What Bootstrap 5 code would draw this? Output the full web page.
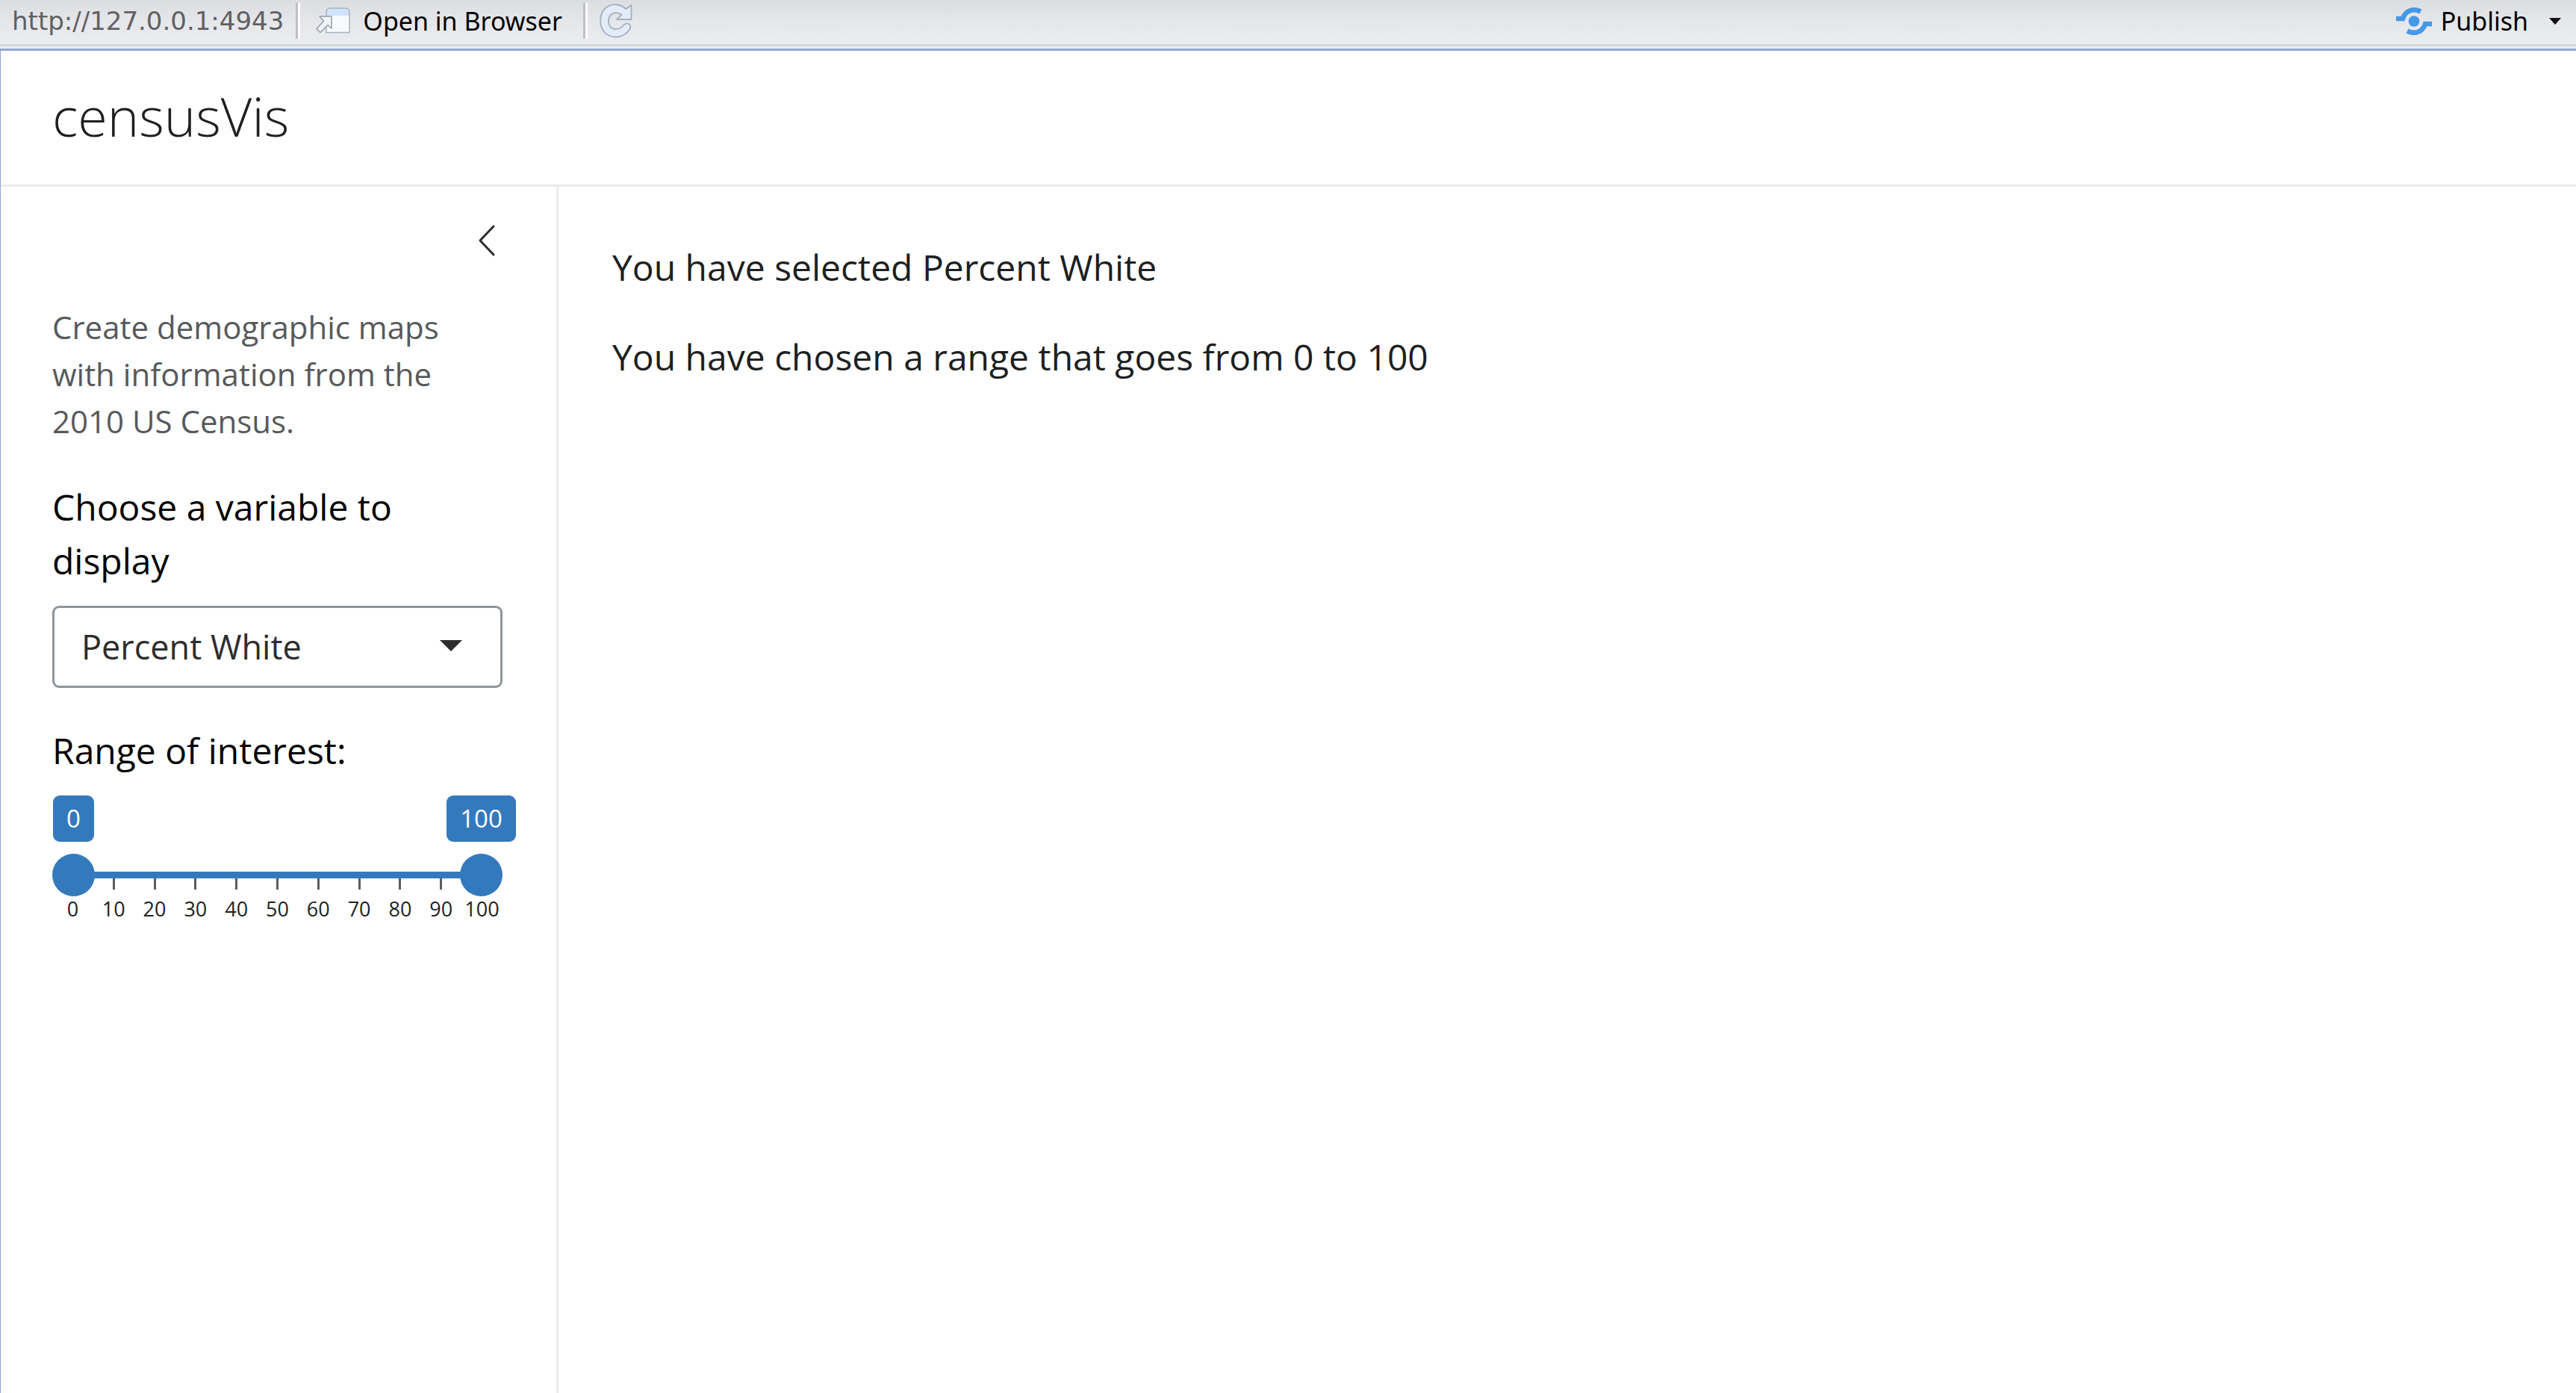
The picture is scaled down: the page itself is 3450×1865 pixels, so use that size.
<!DOCTYPE html>
<html lang="en">
<head>
<meta charset="utf-8">
<meta name="viewport" content="width=device-width, initial-scale=1">
<title>censusVis</title>
<link href="https://cdn.jsdelivr.net/npm/bootstrap@5.3.0/dist/css/bootstrap.min.css" rel="stylesheet">
<script src="https://cdn.jsdelivr.net/npm/bootstrap@5.3.0/dist/js/bootstrap.bundle.min.js"></script>
<style>
  :root { --accent: #3579bd; --rule: #ebebeb; --frame: #92a7d6; }
  body { font-family: "Open Sans", sans-serif; font-size: 48px; line-height: 72px; color: #1d1f21; background: #fff; }

  .viewer-bar { height: 59px; padding: 0 20px 3px 16px; background: linear-gradient(#dcdde1, #e6e7eb 50%, #ebecf0); font-family: "Noto Sans", sans-serif; font-size: 34px; line-height: 48px; }
  .viewer-edge { height: 9px; border-top: 3px solid #d5d6da; border-bottom: 3px solid var(--frame); background: #e9eaee; }
  .viewer-url { font-family: "DejaVu Sans", sans-serif; color: #616161; }
  .viewer-split { width: 6px; height: 48px; background: linear-gradient(90deg, #bfc0c4 0 3px, #fff 3px); }
  .viewer-bar button { padding: 0; border: 0; background: none; color: #000; display: flex; align-items: center; }
  .viewer-bar svg { display: block; }
  .viewer-bar .viewer-open { margin: 0 28px 0 20px; }
  .viewer-bar .publish { margin-right: 28px; gap: 12px; }

  .app { border-left: 1px solid var(--frame); }
  .app-head { padding: 46px 69px 50px; border-bottom: 3px solid var(--rule); }
  .app-head h1 { font-size: 72px; font-weight: 300; line-height: 83px; }
  .side { width: 747px; padding: 48px 72px 72px 69px; border-right: 3px solid var(--rule); }
  .side-toggle { padding: 0; border: 0; background: none; margin-bottom: 60px; }
  .side-toggle svg { display: block; }
  .side-help { font-size: 42px; line-height: 63px; color: #58595b; margin-bottom: 48px; }
  .side label, .side legend { font-size: 48px; line-height: 72px; color: #000; margin-bottom: 24px; float: none; }
  .side .form-select { height: 110px; border: 3px solid #8d959e; border-radius: 9px; padding: 0 100px 0 36px; font-size: 45px; line-height: 68px; color: #2d2d2d; margin-bottom: 48px; background-image: url("data:image/svg+xml,%3csvg xmlns='http://www.w3.org/2000/svg' viewBox='0 0 30 15'%3e%3cpath fill='%232d2d2d' d='M0 0h30L15 15z'/%3e%3c/svg%3e"); background-size: 30px 15px; background-position: right 51px top 43px; }

  .range-ends { margin-bottom: 16px; }
  .range-ends > div { width: 57px; }
  .range-ends output { flex: none; height: 62px; padding: 0 18px; border-radius: 9px; background: var(--accent); color: #fff; font-size: 33px; line-height: 62px; }
  .range-pair { display: grid; height: 57px; position: relative; z-index: 1; background: linear-gradient(var(--accent), var(--accent)) center / calc(100% - 57px) 9px no-repeat; }
  .range-pair input { grid-area: 1 / 1; width: 100%; height: 57px; margin: 0; background: none; appearance: none; pointer-events: none; }
  .range-pair input::-webkit-slider-runnable-track { height: 57px; background: none; }
  .range-pair input::-webkit-slider-thumb { appearance: none; width: 57px; height: 57px; border: 0; border-radius: 50%; background: var(--accent); pointer-events: auto; }
  .range-scale { margin-top: -24px; font-size: 27px; line-height: 36px; color: #222; }
  .range-scale span { flex: 1 1 0; text-align: center; }
  .range-scale span::before { content: ""; display: block; width: 3px; height: 15px; margin: 0 auto 8px; background: #5c5c5c; }
  .results { padding: 72px; }
  .results p { margin-bottom: 48px; }
</style>
</head>
<body class="min-vh-100 d-flex flex-column">
  <nav class="viewer-bar d-flex align-items-center" aria-label="Viewer">
    <span class="viewer-url">http://127.0.0.1:4943</span>
    <span class="viewer-split ms-3"></span>
    <button type="button" class="viewer-open gap-3">
      <svg width="48" height="36" viewBox="0 0 48 36" aria-hidden="true">
        <path d="M15 33.500V7q0-6 6-6h19q6 0 6 6v26.500z" fill="#f8fbfd"/>
        <path d="M15 11V7q0-6 6-6h19q6 0 6 6v4z" fill="#cfe3fb"/>
        <path d="M15 33.500V7q0-6 6-6h19q6 0 6 6v26.500z" fill="none" stroke="#a9b4bf" stroke-width="1.500"/>
        <path d="M6 12h16v16l-5-4.500L7 33.500 2 28.500 11.500 18z" fill="#f1f4f8" stroke="#91a0ad" stroke-width="1.500" stroke-linejoin="round"/>
      </svg>
      <span>Open in Browser</span>
    </button>
    <span class="viewer-split"></span>
    <button type="button" class="ms-3" aria-label="Refresh">
      <svg width="44" height="46" viewBox="0 0 44 46" aria-hidden="true">
        <path d="M42.500 2v19H23l6.500-6.500C20 9 12 14 12 23.500c0 11 12 14 19.500 6 2-3 5.500-4 8-2s2.500 4.500 0 8C28 51 1.500 46 1.200 23.500 1 2 22-5 35.500 7z" fill="#e3ecfb" stroke="#a6afbb" stroke-width="1.800" stroke-linejoin="round"/>
      </svg>
    </button>
    <div class="d-flex align-items-center ms-auto">
      <button type="button" class="publish">
        <svg width="48" height="37" viewBox="0 0 48 37" aria-hidden="true">
          <circle cx="24" cy="18.500" r="7.300" fill="#4599e5"/>
          <path d="M0 15h9C12 5 22 0 33 5.500M48 22h-9C36 32 26 37 15 31.500" fill="none" stroke="#4599e5" stroke-width="6.500"/>
        </svg>
        <span>Publish</span>
      </button>
      <button type="button" class="publish-more" aria-label="Publish options">
        <svg width="16" height="9" viewBox="0 0 16 9" aria-hidden="true"><path d="M0 0h16L8 9z" fill="#111"/></svg>
      </button>
    </div>
  </nav>
  <div class="viewer-edge"></div>

  <div class="app flex-grow-1 d-flex flex-column">
    <header class="app-head"><h1 class="m-0">censusVis</h1></header>
    <div class="d-flex flex-grow-1">
      <aside class="side flex-shrink-0">
        <div class="d-flex justify-content-end">
          <button type="button" class="side-toggle" aria-label="Toggle sidebar">
            <svg width="40" height="48" viewBox="0 0 40 48" fill="none" stroke="#2b2b2b" stroke-width="3" stroke-linecap="round" stroke-linejoin="round" aria-hidden="true"><path d="M28 5 10 24l18 19"/></svg>
          </button>
        </div>
        <p class="side-help">Create demographic maps with information from the 2010 US Census.</p>
        <label for="variable" class="d-block">Choose a variable to display</label>
        <select id="variable" class="form-select">
          <option selected>Percent White</option>
          <option>Percent Black</option>
          <option>Percent Hispanic</option>
          <option>Percent Asian</option>
        </select>
        <fieldset>
          <legend>Range of interest:</legend>
          <div class="range-ends d-flex justify-content-between">
            <div class="d-flex justify-content-center"><output for="range-low">0</output></div>
            <div class="d-flex justify-content-center"><output for="range-high">100</output></div>
          </div>
          <div class="range-pair">
            <input type="range" id="range-low" min="0" max="100" value="0" aria-label="Range minimum">
            <input type="range" id="range-high" min="0" max="100" value="100" aria-label="Range maximum">
          </div>
          <div class="range-scale d-flex">
            <span>0</span><span>10</span><span>20</span><span>30</span><span>40</span><span>50</span><span>60</span><span>70</span><span>80</span><span>90</span><span>100</span>
          </div>
        </fieldset>
      </aside>
      <main class="results flex-grow-1">
        <p>You have selected Percent White</p>
        <p class="mb-0">You have chosen a range that goes from 0 to 100</p>
      </main>
    </div>
  </div>
</body>
</html>
